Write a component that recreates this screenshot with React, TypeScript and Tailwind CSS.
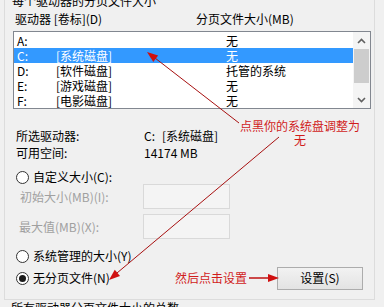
import React from 'react';

const drives = [
  { letter: 'A:', label: '', size: '无' },
  { letter: 'C:', label: '[系统磁盘]', size: '无', selected: true },
  { letter: 'D:', label: '[软件磁盘]', size: '托管的系统' },
  { letter: 'E:', label: '[游戏磁盘]', size: '无' },
  { letter: 'F:', label: '[电影磁盘]', size: '无' },
];

const Radio = ({ checked }: { checked?: boolean }) => (
  <span className="w-[13px] h-[13px] rounded-full border border-[#333333] bg-white flex items-center justify-center shrink-0">
    {checked && <span className="w-[7px] h-[7px] rounded-full bg-[#1a1a1a]" />}
  </span>
);

const Chevron = ({ up }: { up?: boolean }) => (
  <svg width="9" height="6" viewBox="0 0 9 6">
    <path
      d={up ? 'M1 5 L4.5 1.5 L8 5' : 'M1 1 L4.5 4.5 L8 1'}
      fill="none"
      stroke="#606060"
      strokeWidth="1.6"
    />
  </svg>
);

const App: React.FC = () => {
  return (
    <div className="relative w-[384px] h-[307px] overflow-hidden bg-[#f0f0f0] text-[12px] text-black font-['Noto_Sans_CJK_SC',sans-serif]">
      {/* 分页文件分组框 */}
      <div className="ml-[4px] -mt-px w-[371px] h-[301px] border border-[#dcdcdc] flex flex-col">
        <div className="-mt-[7px] ml-[5px] px-[2px] w-fit leading-[16px] bg-[#f0f0f0]">
          每个驱动器的分页文件大小
        </div>

        <div className="mt-[2px] flex leading-[16px] pl-[10px]">
          <span className="w-[181px]">驱动器 [卷标](D)</span>
          <span>分页文件大小(MB)</span>
        </div>

        <div className="mt-[4px] ml-[8px] w-[358px] h-[78px] border border-[#828790] bg-white flex">
          <div className="flex-1 pt-px">
            {drives.map((d) => (
              <div
                key={d.letter}
                className={`h-[15px] leading-[15px] flex ${d.selected ? 'bg-[#3399ff] text-white' : ''}`}
              >
                <span className="pl-[3px] w-[42px]">{d.letter}</span>
                <span className="w-[170px]">{d.label}</span>
                <span>{d.size}</span>
              </div>
            ))}
          </div>
          <div className="w-[17px] bg-[#f4f4f4] flex flex-col">
            <div className="h-[17px] flex items-center justify-center">
              <Chevron up />
            </div>
            <div className="h-[34px] mx-px bg-[#cdcdcd]" />
            <div className="flex-1" />
            <div className="h-[17px] flex items-center justify-center">
              <Chevron />
            </div>
          </div>
        </div>

        <div className="mt-[18px] pl-[11px] leading-[17px]">
          <div className="flex">
            <span className="w-[128px]">所选驱动器:</span>
            <span className="flex gap-[7px]">
              <span>C:</span>
              <span>[系统磁盘]</span>
            </span>
          </div>
          <div className="flex">
            <span className="w-[128px]">可用空间:</span>
            <span>14174 MB</span>
          </div>
        </div>

        <div className="mt-[8px] pl-[11px] h-[16px] flex items-center gap-[4px]">
          <Radio />
          <span>自定义大小(C):</span>
        </div>

        <div className="-mt-px flex items-center h-[25px] text-[#a0a0a0]">
          <span className="pl-[15px] w-[138px]">初始大小(MB)(I):</span>
          <span className="w-[87px] h-[25px] border border-[#d9d9d9] bg-[#f4f4f4]" />
        </div>
        <div className="mt-[5px] flex items-center h-[25px] text-[#a0a0a0]">
          <span className="pl-[14px] w-[138px]">最大值(MB)(X):</span>
          <span className="w-[87px] h-[25px] border border-[#d9d9d9] bg-[#f4f4f4]" />
        </div>

        <div className="mt-[9px] pl-[11px] h-[16px] flex items-center gap-[4px]">
          <Radio />
          <span>系统管理的大小(Y)</span>
        </div>

        <div className="mt-[2px] h-[24px] flex items-center">
          <div className="w-[170px] pl-[11px] flex items-center gap-[4px]">
            <Radio checked />
            <span>无分页文件(N)</span>
          </div>
          <span className="text-[#d01c1c]">然后点击设置</span>
          <button className="ml-auto mr-[11px] w-[86px] h-[23px] border border-[#acacac] bg-linear-to-b from-[#f2f2f2] to-[#e3e3e3] text-[12px] leading-none">
            设置(S)
          </button>
        </div>
      </div>

      <div className="pl-[11px] leading-[16px]">所有驱动器分页文件大小的总数</div>

      {/* 标注 */}
      <div className="absolute left-[240px] top-[119px] w-[120px] text-center leading-[14px] text-[#d01c1c]">
        点黑你的系统盘调整为
        <br />无
      </div>
      <svg className="absolute inset-0 pointer-events-none" width="384" height="307" viewBox="0 0 384 307">
        <line x1="239" y1="123" x2="155" y2="58" stroke="#a81010" strokeWidth="1" />
        <polygon points="147,52 158.1,55.5 153.3,61.9" fill="#d01010" />
        <line x1="279" y1="137" x2="117" y2="273" stroke="#a81010" strokeWidth="1" />
        <polygon points="109,280 120,276 114.8,269.8" fill="#d01010" />
        <line x1="249" y1="278" x2="268" y2="278" stroke="#c01010" strokeWidth="1.5" />
        <polygon points="279,278 268,274 268,282" fill="#d01010" />
      </svg>
    </div>
  );
};

export default App;
